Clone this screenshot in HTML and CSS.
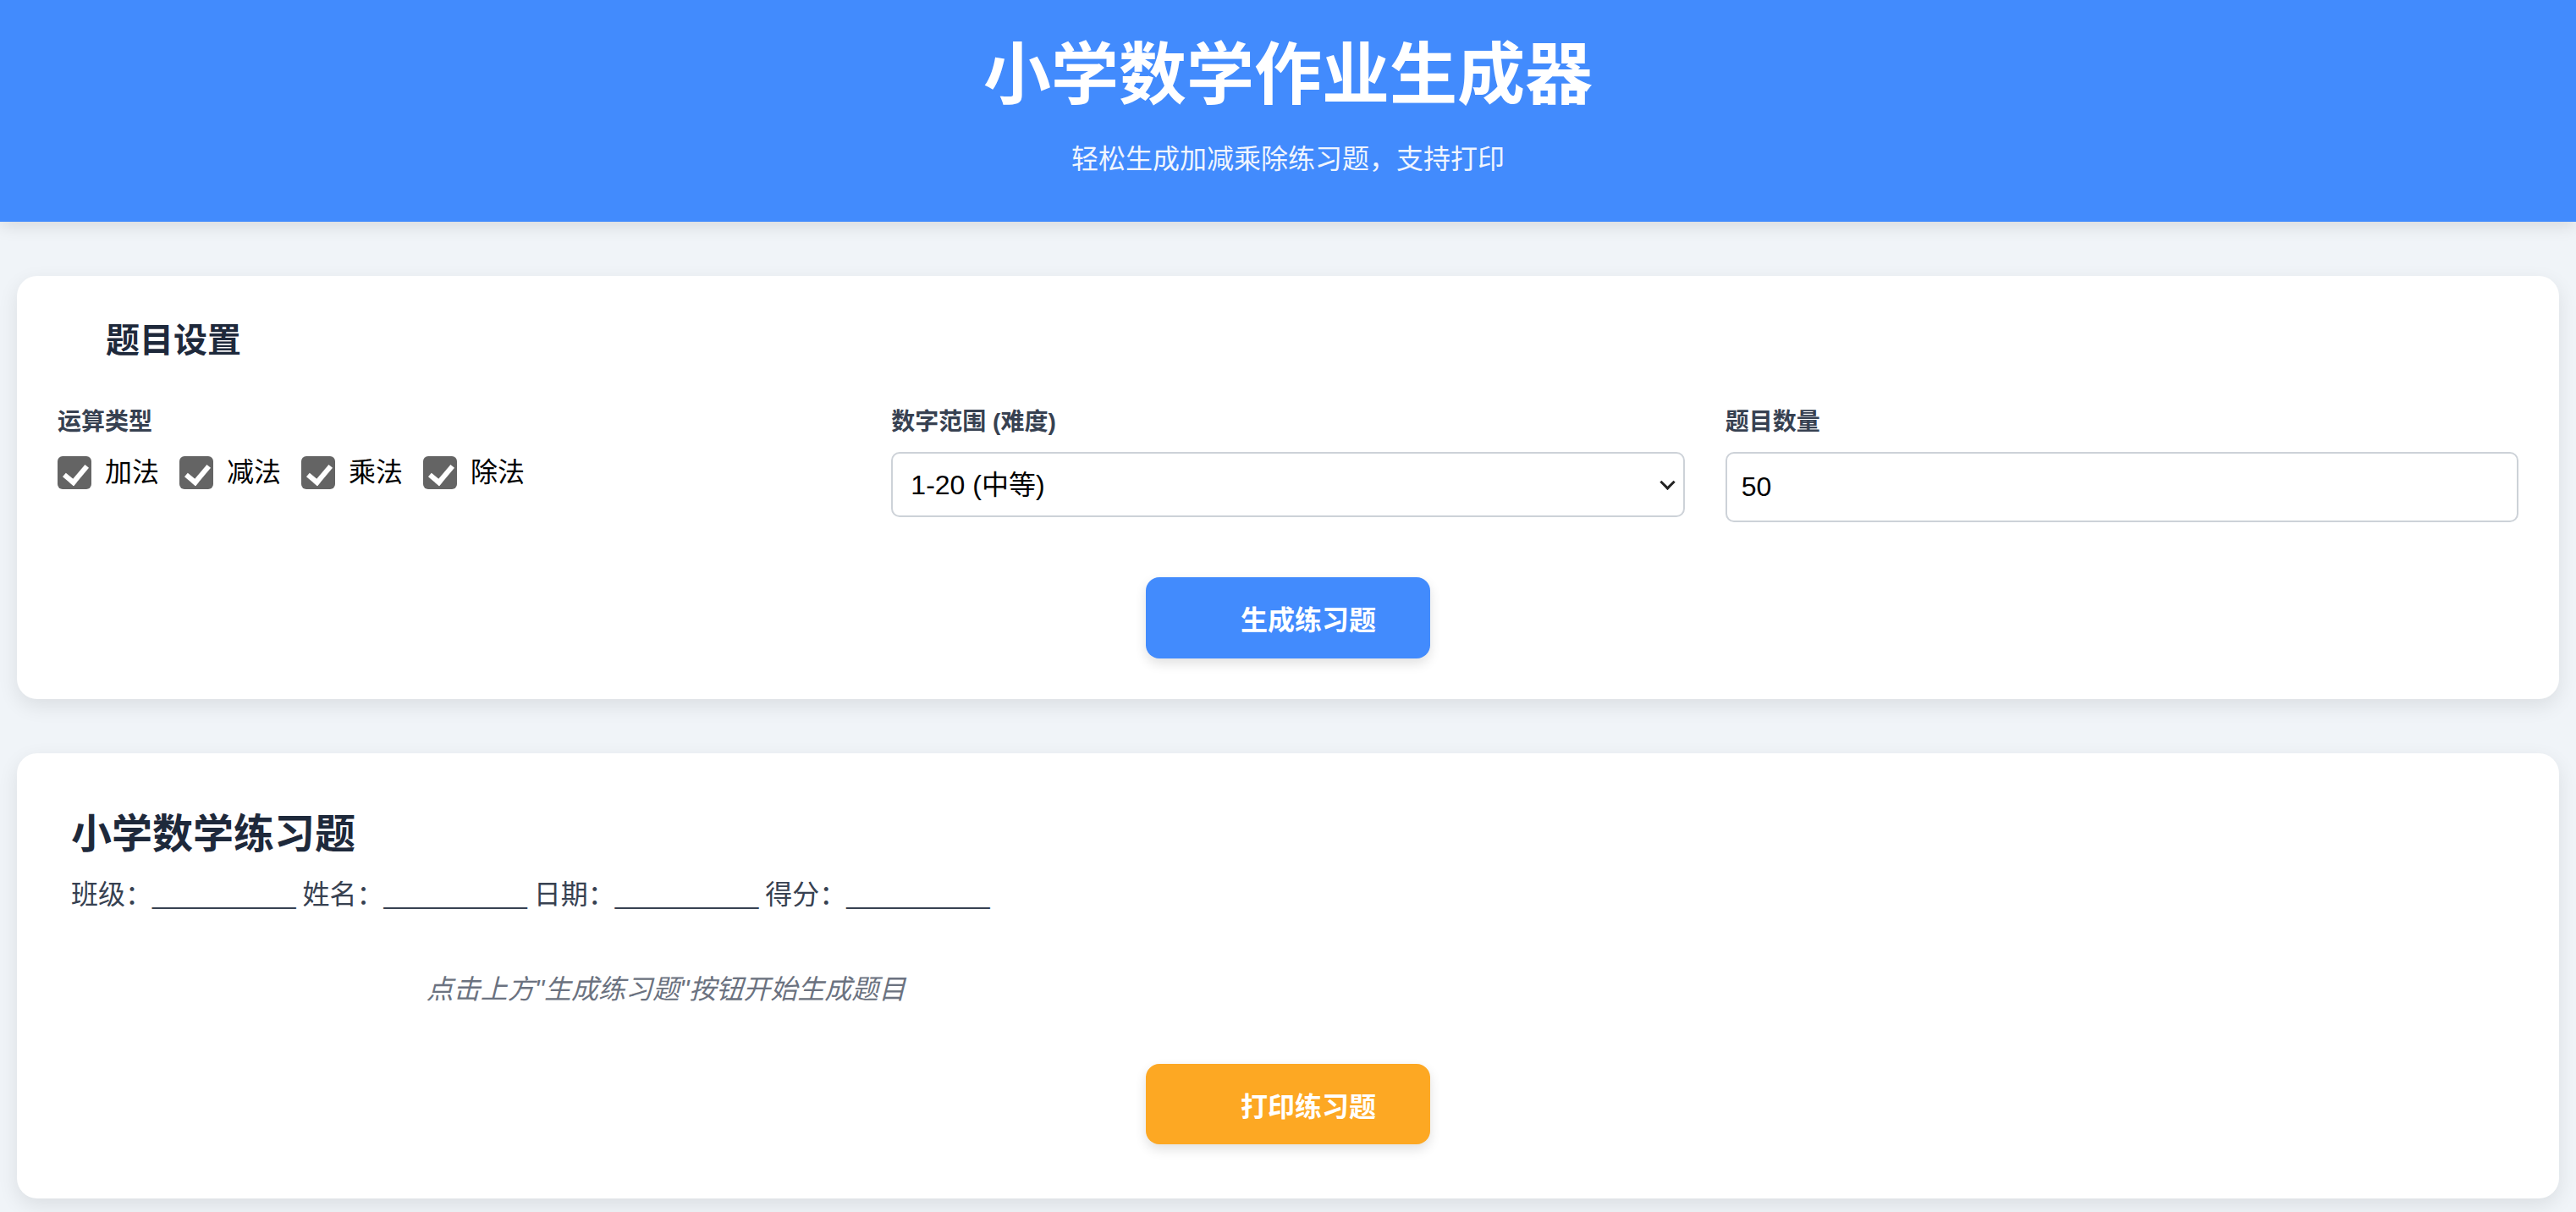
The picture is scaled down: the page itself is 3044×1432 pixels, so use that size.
FILE: index.html
```html
<!DOCTYPE html>
<html lang="zh-CN">
<head>
<meta charset="utf-8">
<title>小学数学作业生成器</title>
<link rel="stylesheet" href="styles.css">
</head>
<body>
<header class="hero">
  <h1 class="hero-title">小学数学作业生成器</h1>
  <p class="hero-sub">轻松生成加减乘除练习题，支持打印</p>
</header>
<main class="page">
  <section class="card">
    <h2 class="card-title"><span class="icon-slot"></span>题目设置</h2>
    <div class="form-grid">
      <div class="field">
        <div class="field-label">运算类型</div>
        <div class="checks">
          <label class="check"><input type="checkbox" checked><span>加法</span></label>
          <label class="check"><input type="checkbox" checked><span>减法</span></label>
          <label class="check"><input type="checkbox" checked><span>乘法</span></label>
          <label class="check"><input type="checkbox" checked><span>除法</span></label>
        </div>
      </div>
      <div class="field">
        <label class="field-label" for="range">数字范围 (难度)</label>
        <div class="select-wrap">
          <select id="range" class="control select">
            <option>1-20 (中等)</option>
          </select>
        </div>
      </div>
      <div class="field">
        <label class="field-label" for="count">题目数量</label>
        <input id="count" class="control input" type="text" value="50">
      </div>
    </div>
    <div class="actions">
      <button class="btn btn-primary"><span class="btn-icon"></span>生成练习题</button>
    </div>
  </section>

  <section class="card">
    <div class="sheet">
      <h2 class="sheet-title">小学数学练习题</h2>
      <div class="sheet-info">班级：<span class="blank">__________</span> 姓名：<span class="blank">__________</span> 日期：<span class="blank">__________</span> 得分：<span class="blank">__________</span></div>
      <div class="problems">
        <p class="placeholder">点击上方"生成练习题"按钮开始生成题目</p>
      </div>
      <div class="actions sheet-actions">
        <button class="btn btn-print"><span class="btn-icon"></span>打印练习题</button>
      </div>
    </div>
  </section>
</main>
</body>
</html>
```

FILE: styles.css
```css
* {
  box-sizing: border-box;
}

html, body {
  margin: 0;
  padding: 0;
}

body {
  background: #f0f4f8;
  font-family: "Liberation Sans", "Noto Sans CJK SC", sans-serif;
  color: #1f2937;
}

.hero {
  background: #428bfd;
  color: #ffffff;
  text-align: center;
  height: 262px;
  padding-top: 36px;
  box-shadow: 0 4px 20px rgba(0, 0, 0, 0.12);
  position: relative;
  z-index: 1;
}

.hero-title {
  margin: 0;
  font-size: 80px;
  line-height: 106px;
  font-weight: 700;
}

.hero-sub {
  margin: 22px 0 0;
  font-size: 32px;
  line-height: 48px;
  opacity: 0.92;
}

.page {
  padding: 64px 20px 14px;
}

.card {
  background: #ffffff;
  border-radius: 24px;
  padding: 48px;
  box-shadow: 0 8px 24px rgba(0, 0, 0, 0.09);
  margin-bottom: 64px;
}

.card-title {
  margin: 0;
  font-size: 40px;
  line-height: 56px;
  font-weight: 700;
  color: #1e293b;
  display: flex;
  align-items: center;
}

.icon-slot {
  display: inline-block;
  width: 57px;
  height: 40px;
}

.form-grid {
  margin-top: 49px;
  display: grid;
  grid-template-columns: repeat(3, 1fr);
  gap: 48px;
}

.field {
  display: flex;
  flex-direction: column;
}

.field-label {
  font-size: 28px;
  line-height: 40px;
  font-weight: 700;
  color: #374151;
  margin-bottom: 15px;
}

.checks {
  display: flex;
  align-items: center;
  gap: 24px;
  height: 48px;
}

.check {
  display: flex;
  align-items: center;
  gap: 16px;
  font-size: 32px;
  line-height: 48px;
  color: #000000;
}

.check input {
  appearance: none;
  -webkit-appearance: none;
  margin: 0;
  width: 40px;
  height: 39px;
  border-radius: 6px;
  background: #646464;
  position: relative;
  flex: none;
}

.check input::after {
  content: "";
  position: absolute;
  left: 13px;
  top: 5px;
  width: 11px;
  height: 22px;
  border-right: 6px solid #ffffff;
  border-bottom: 6px solid #ffffff;
  transform: rotate(40deg);
}

.control {
  width: 100%;
  border: 2px solid #cdd2d8;
  border-radius: 10px;
  background: #ffffff;
  color: #000000;
  font-family: "Liberation Sans", "Noto Sans CJK SC", sans-serif;
  font-size: 32px;
  outline: none;
}

.select-wrap {
  position: relative;
}

.select-wrap::after {
  content: "";
  position: absolute;
  right: 14px;
  top: 50%;
  width: 10px;
  height: 10px;
  border-right: 3px solid #222222;
  border-bottom: 3px solid #222222;
  transform: translateY(-75%) rotate(45deg);
  pointer-events: none;
}

.select {
  appearance: none;
  -webkit-appearance: none;
  height: 77px;
  padding: 0 60px 0 21px;
}

.input {
  height: 83px;
  padding: 0 17px;
}

.actions {
  margin-top: 65px;
  display: flex;
  justify-content: center;
}

.btn {
  border: none;
  border-radius: 16px;
  height: 96px;
  padding: 0 64px;
  color: #ffffff;
  font-family: "Liberation Sans", "Noto Sans CJK SC", sans-serif;
  font-size: 32px;
  font-weight: 700;
  display: flex;
  align-items: center;
  cursor: pointer;
}

.btn-icon {
  display: inline-block;
  width: 48px;
  height: 32px;
}

.btn-primary {
  background: #428bfd;
  box-shadow: 0 6px 14px rgba(0, 0, 0, 0.12);
}

.btn-print {
  background: #fda823;
  height: 95px;
  box-shadow: 0 6px 14px rgba(0, 0, 0, 0.12);
}

.sheet {
  padding: 16px;
}

.sheet-title {
  margin: 0;
  font-size: 48px;
  line-height: 64px;
  font-weight: 700;
  color: #1e293b;
}

.sheet-info {
  margin-top: 15px;
  font-size: 32px;
  line-height: 48px;
  color: #374151;
}

.blank {
  letter-spacing: -0.95px;
}

.problems {
  margin-top: 64px;
  display: grid;
  grid-template-columns: repeat(2, 1fr);
  gap: 64px;
}

.placeholder {
  margin: 0;
  text-align: center;
  font-style: italic;
  font-size: 32px;
  line-height: 48px;
  color: #6b7280;
}

.sheet-actions {
  margin-top: 64px;
}
```
